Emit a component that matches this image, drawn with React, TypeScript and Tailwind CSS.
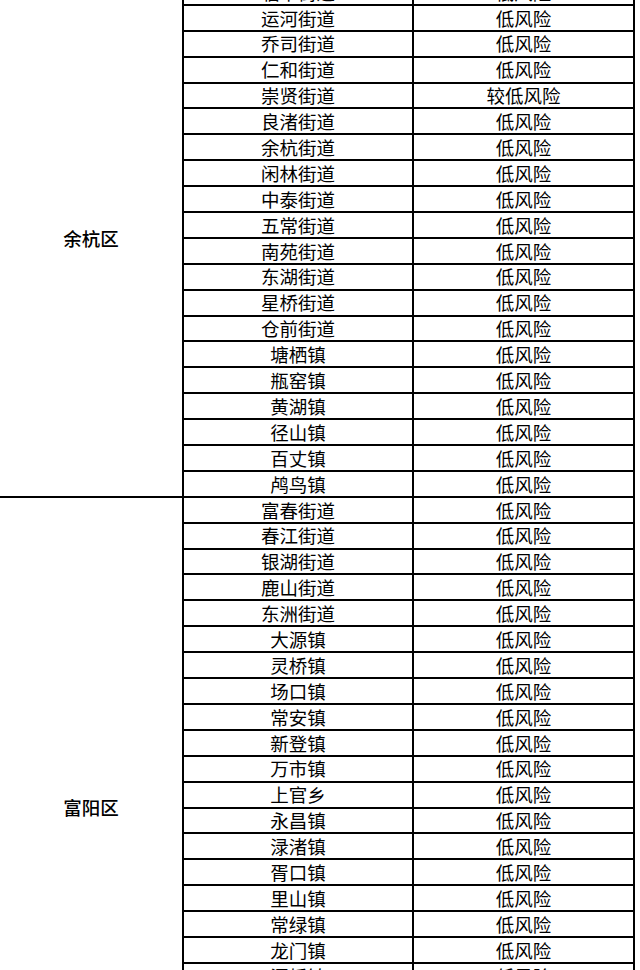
const groups: { district: string; towns: string[] }[] = [
  {
    district: "余杭区",
    towns: [
      "临平街道", "运河街道", "乔司街道", "仁和街道", "崇贤街道", "良渚街道", "余杭街道",
      "闲林街道", "中泰街道", "五常街道", "南苑街道", "东湖街道", "星桥街道", "仓前街道",
      "塘栖镇", "瓶窑镇", "黄湖镇", "径山镇", "百丈镇", "鸬鸟镇",
    ],
  },
  {
    district: "富阳区",
    towns: [
      "富春街道", "春江街道", "银湖街道", "鹿山街道", "东洲街道", "大源镇", "灵桥镇",
      "场口镇", "常安镇", "新登镇", "万市镇", "上官乡", "永昌镇", "渌渚镇", "胥口镇",
      "里山镇", "常绿镇", "龙门镇", "洞桥镇", "湖源乡", "环山乡", "新桐乡", "渔山乡", "春建乡",
    ],
  },
];

const riskOf = (town: string) => (town === "崇贤街道" ? "较低风险" : "低风险");

export default function App() {
  return (
    <div
      className="h-[970px] w-[640px] overflow-hidden bg-white text-[18.5px] leading-none text-black"
      style={{ fontFamily: '"Noto Sans CJK SC", "Noto Sans", sans-serif' }}
    >
      <div className="mt-[-20px]">
        {groups.map((group) => (
          <div key={group.district} className="flex">
            <div className="flex w-[184px] shrink-0 items-center justify-center border-r-2 border-b-2 border-black font-medium">
              {group.district}
            </div>
            <div className="flex flex-col">
              {group.towns.map((town) => (
                <div key={town} className="flex h-[25.9px] border-b-2 border-black">
                  <div className="flex w-[230px] items-center justify-center border-r-2 border-black">
                    {town}
                  </div>
                  <div className="flex w-[221px] items-center justify-center border-r-2 border-black">
                    {riskOf(town)}
                  </div>
                </div>
              ))}
            </div>
          </div>
        ))}
      </div>
    </div>
  );
}
